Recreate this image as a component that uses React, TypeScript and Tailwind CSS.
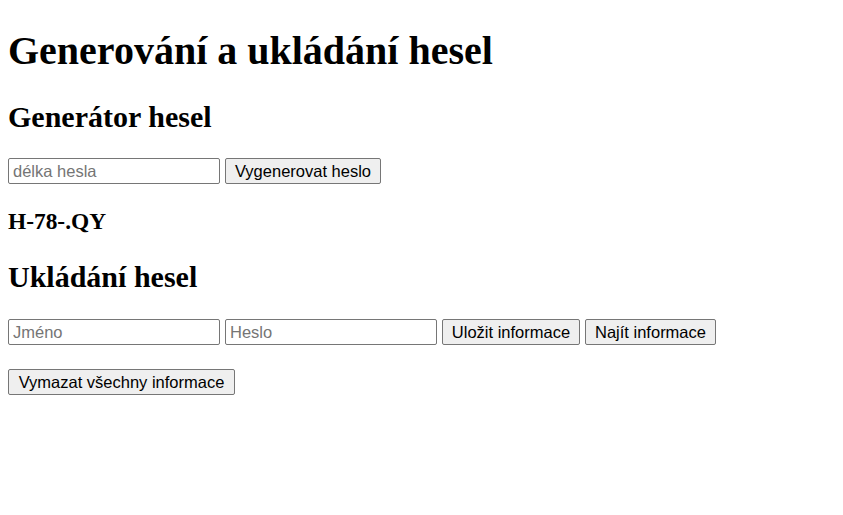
export default function App() {
  const serif = { fontFamily: '"Liberation Serif", "Times New Roman", serif' };
  const inputCls =
    "w-[212px] h-[26px] border border-[#767676] rounded-[2px] px-[4px] text-[16.5px] placeholder:text-[#757575] outline-none";
  const btnCls =
    "h-[26px] border border-[#767676] rounded-[2px] bg-[#efefef] text-[16.5px] text-center leading-none";
  return (
    <div className="px-2 pt-[8px] bg-white text-black min-h-[515px] flow-root" style={serif}>
      <h1 className="text-[40px] font-bold mt-[19.5px] mb-0 leading-[46px]">Generování a ukládání hesel</h1>
      <h2 className="text-[30px] font-bold mt-[26px] mb-0 leading-[34.5px]">Generátor hesel</h2>
      <div className="flex items-center gap-[5px] mt-[24px] font-['Liberation_Sans',Arial,sans-serif]">
        <input placeholder="délka hesla" className={inputCls} />
        <button className={`${btnCls} w-[156px]`}>Vygenerovat heslo</button>
      </div>
      <h3 className="text-[23.4px] font-bold mt-[23.7px] mb-0 leading-[27px]">H-78-.QY</h3>
      <h2 className="text-[30px] font-bold mt-[25px] mb-0 leading-[34.5px]">Ukládání hesel</h2>
      <div className="flex items-center gap-[5px] mt-[25px] font-['Liberation_Sans',Arial,sans-serif]">
        <input placeholder="Jméno" className={inputCls} />
        <input placeholder="Heslo" className={inputCls} />
        <button className={`${btnCls} w-[138px]`}>Uložit informace</button>
        <button className={`${btnCls} w-[131px]`}>Najít informace</button>
      </div>
      <div className="mt-[24px] font-['Liberation_Sans',Arial,sans-serif]">
        <button className={`${btnCls} w-[227px]`}>Vymazat všechny informace</button>
      </div>
    </div>
  );
}
